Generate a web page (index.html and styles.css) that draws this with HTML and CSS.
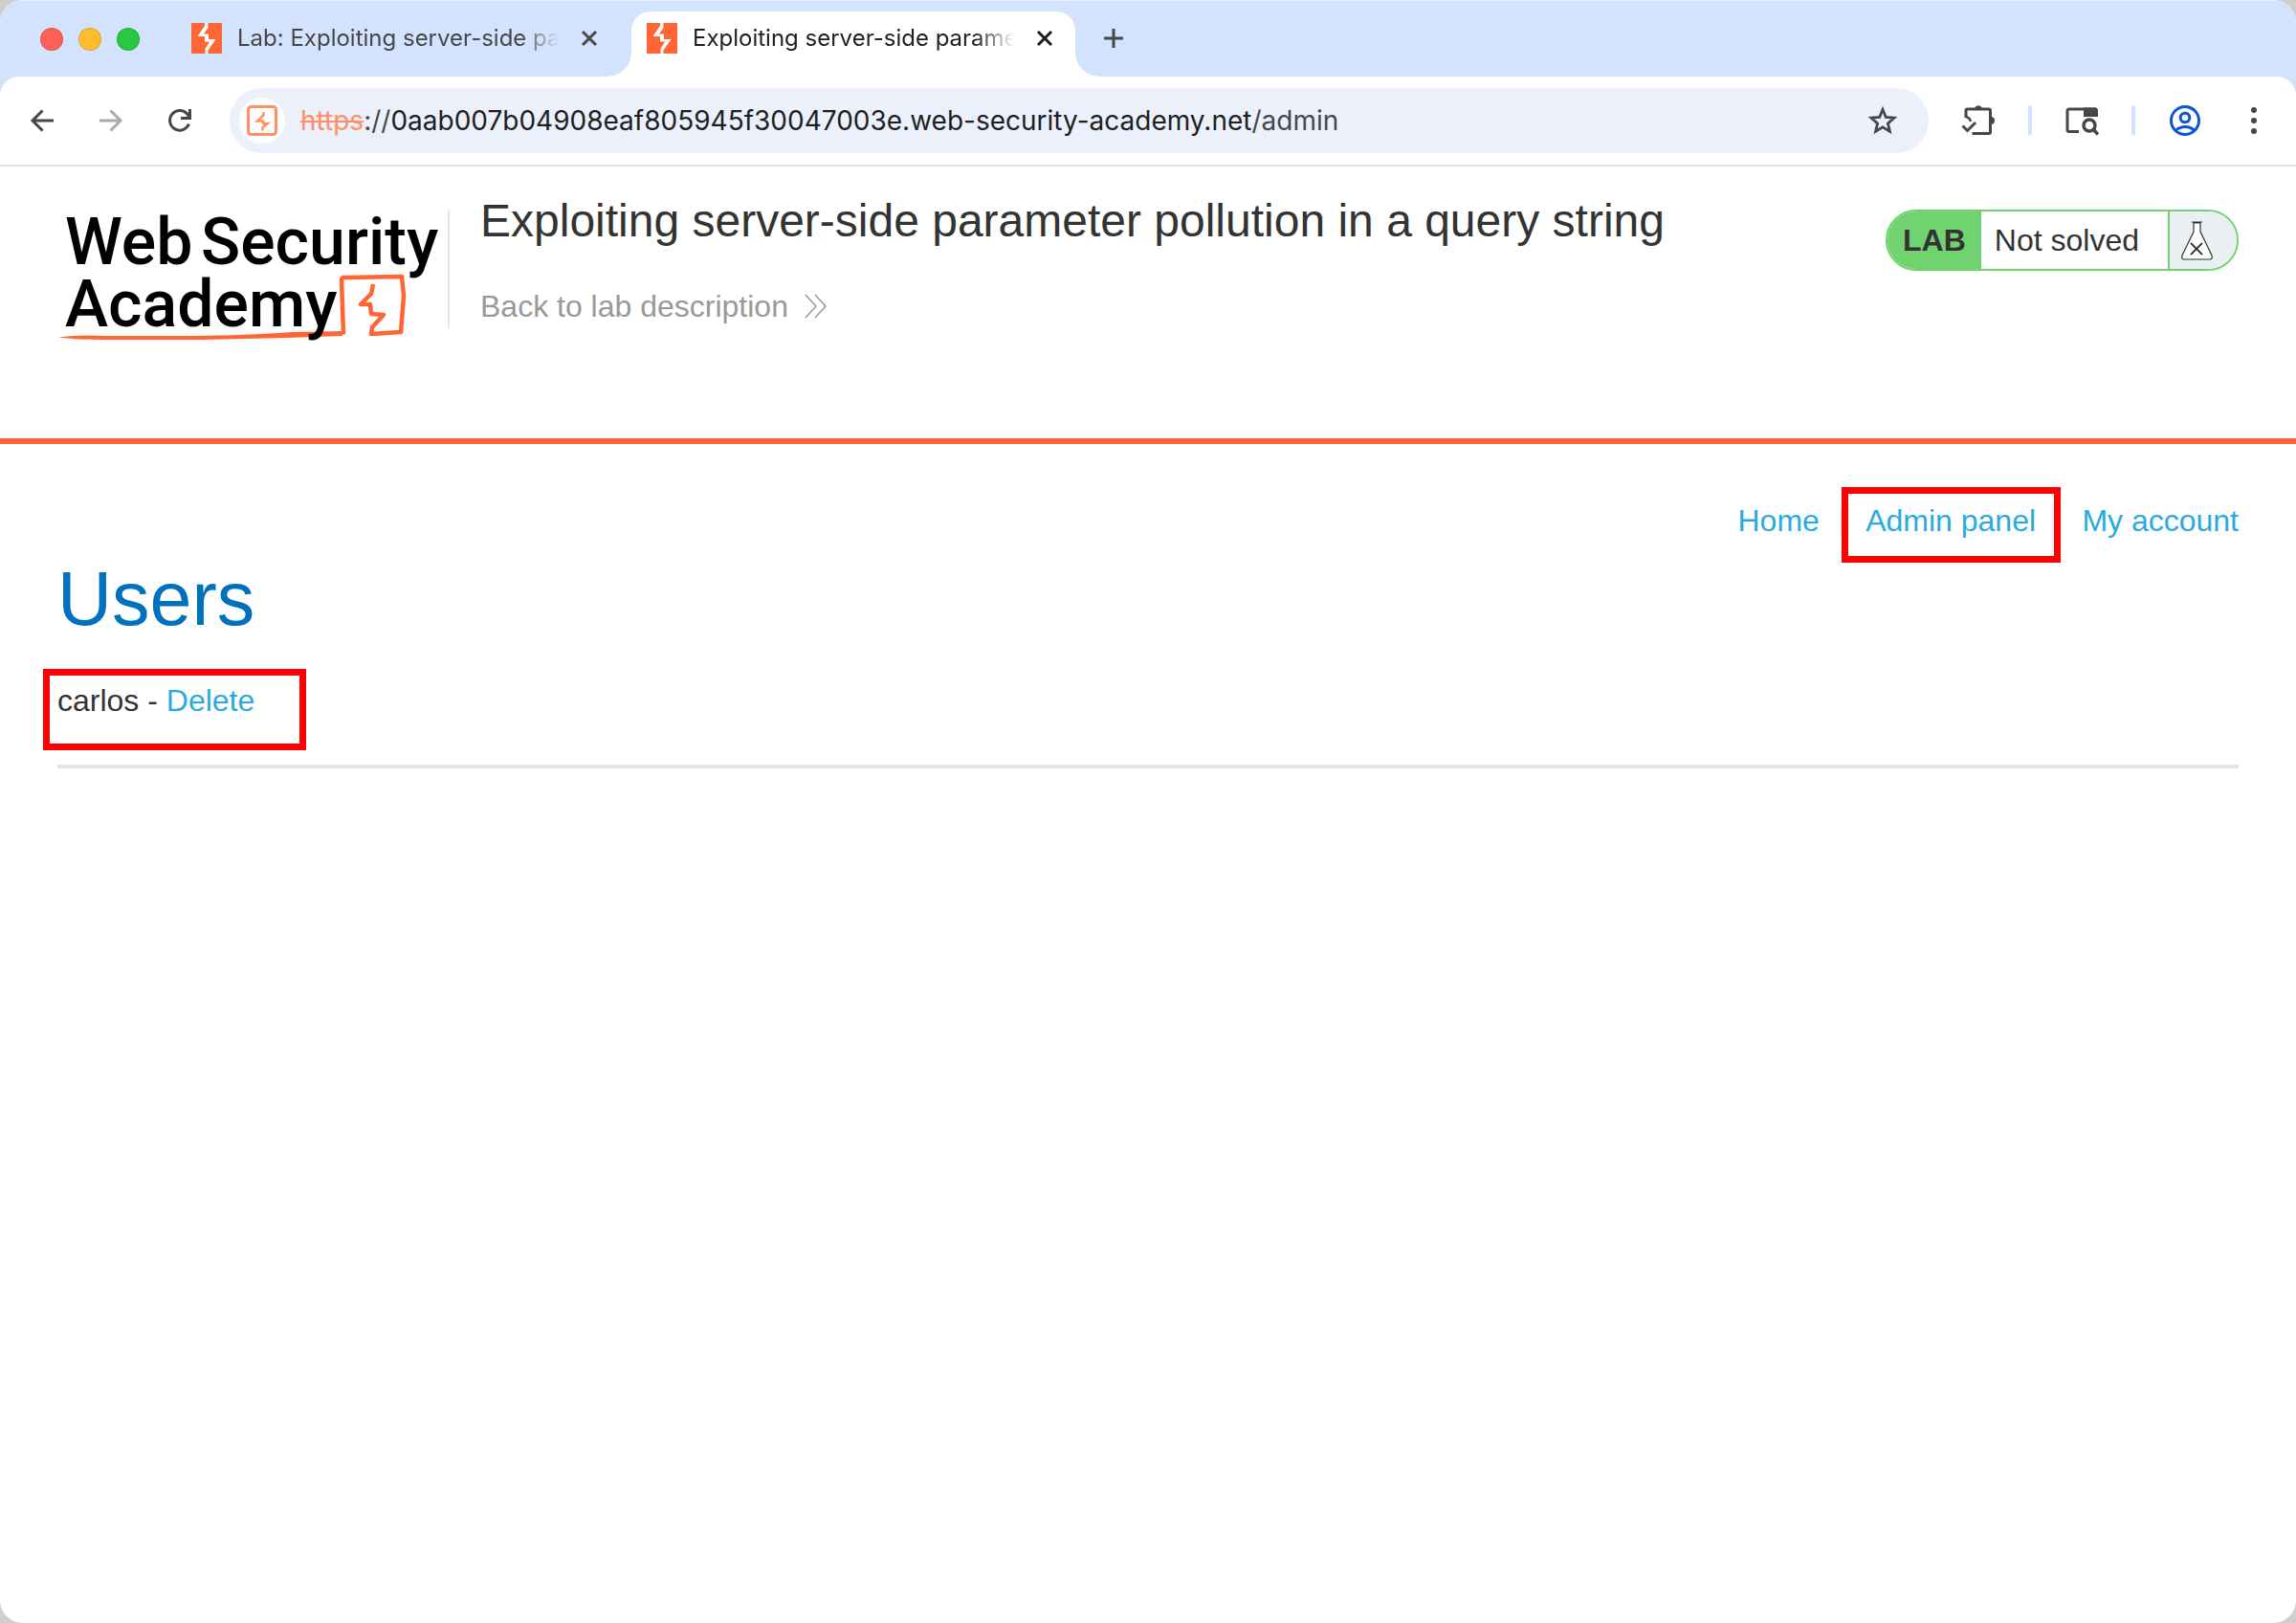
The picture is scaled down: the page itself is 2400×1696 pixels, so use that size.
FILE: index.html
```html
<!DOCTYPE html>
<html lang="en">
<head>
<meta charset="utf-8">
<title>Exploiting server-side parameter pollution in a query string</title>
<link rel="stylesheet" href="styles.css">
</head>
<body>
<svg class="defs" width="0" height="0" aria-hidden="true">
  <symbol id="burp" viewBox="0 0 32 32">
    <path fill="#ff6633" d="M0 0h32v32H0z"/>
    <path fill="#fff" d="M14 0h3.500v5l-4.500 6.500h5V17h7.500L17.500 28.500V32h-3v-5l4.500-7.500h-5V14H6.500L14 3z"/>
  </symbol>
  <symbol id="cross" viewBox="0 0 24 24">
    <path d="M5 5l14 14M19 5L5 19" stroke="currentColor" stroke-width="3" fill="none"/>
  </symbol>
</svg>
<div class="window">
  <header class="tabstrip">
    <div class="lights"><span class="light close"></span><span class="light min"></span><span class="light max"></span></div>
    <div class="tabs">
      <div class="tab">
        <svg class="favicon"><use href="#burp"/></svg>
        <span class="tab-title">Lab: Exploiting server-side parameter</span>
        <button class="tab-close" aria-label="Close tab"><svg width="24" height="24"><use href="#cross"/></svg></button>
      </div>
      <div class="tab active">
        <svg class="favicon"><use href="#burp"/></svg>
        <span class="tab-title">Exploiting server-side parameter</span>
        <button class="tab-close" aria-label="Close tab"><svg width="24" height="24"><use href="#cross"/></svg></button>
      </div>
    </div>
    <button class="new-tab" aria-label="New tab"><svg width="24" height="24" viewBox="0 0 24 24"><path d="M12 2v20M2 12h20" stroke="#474747" stroke-width="3"/></svg></button>
  </header>

  <nav class="toolbar" aria-label="Browser">
    <div class="history">
      <button class="tool" aria-label="Back"><svg width="32" height="32" viewBox="0 0 32 32"><path d="M28 16H6M16.500 5.500L6 16l10.500 10.500" fill="none" stroke="#474747" stroke-width="3"/></svg></button>
      <button class="tool" aria-label="Forward"><svg width="32" height="32" viewBox="0 0 32 32"><path d="M4 16h22M15.500 5.500L26 16 15.500 26.500" fill="none" stroke="#ababab" stroke-width="3"/></svg></button>
      <button class="tool" aria-label="Reload"><svg width="32" height="32" viewBox="0 0 32 32"><path d="M25.500 19.500A10.300 10.300 0 1 1 24 9.500L26 12M26.500 4v9.500H17" fill="none" stroke="#474747" stroke-width="3"/></svg></button>
    </div>
    <div class="omnibox">
      <button class="site" aria-label="Site information"><svg width="32" height="32" viewBox="0 0 32 32"><rect x="1.500" y="1.500" width="29" height="29" rx="3" fill="none" stroke="#ff8f66" stroke-width="3"/><path d="M17.500 7v3.500l-6.500 6h6V19h5l-5.500 4v3.500" fill="none" stroke="#ff8f66" stroke-width="2.400"/></svg></button>
      <div class="url" role="textbox" aria-label="Address"><s>https</s><span class="dim">://</span>0aab007b04908eaf805945f30047003e.web-security-academy.net<span class="dim">/admin</span></div>
      <button class="tool" aria-label="Bookmark"><svg width="32" height="32" viewBox="0 0 32 32"><path d="M16 4.500l3.300 8 8.700.7-6.600 5.700 2 8.500L16 22.900l-7.400 4.500 2-8.500L4 13.200l8.700-.7z" fill="none" stroke="#474747" stroke-width="2.800"/></svg></button>
    </div>
    <div class="actions">
      <button class="tool" aria-label="Extensions"><svg width="36" height="36" viewBox="0 0 36 36"><path d="M5 15V7.500a1.500 1.500 0 0 1 1.500-1.500H29a1.500 1.500 0 0 1 1.500 1.500V30a1.500 1.500 0 0 1-1.500 1.500H11.500" fill="none" stroke="#474747" stroke-width="3"/><path d="M14 5a4.300 4.300 0 0 1 8 0zM31 14a4 4 0 0 1 0 8z" fill="#474747"/><path d="M5 14c3 1 5 2.500 4.500 5" fill="none" stroke="#474747" stroke-width="2.500"/><path d="M1.500 23.500l5 5 8.500-8.500" fill="none" stroke="#474747" stroke-width="3"/></svg></button>
      <span class="divider"></span>
      <button class="tool" aria-label="Search side panel"><svg width="36" height="36" viewBox="0 0 36 36"><path d="M15 29.500H4.500a1.500 1.500 0 0 1-1.500-1.500V7.500A1.500 1.500 0 0 1 4.500 6H33" fill="none" stroke="#474747" stroke-width="3"/><path d="M20 4.500h12a3 3 0 0 1 3 3V14H20z" fill="#474747"/><circle cx="26" cy="23" r="6" fill="none" stroke="#474747" stroke-width="3.400"/><path d="M30 27l5 5.500" stroke="#474747" stroke-width="3.400"/></svg></button>
      <span class="divider"></span>
      <button class="tool" aria-label="Profile"><svg width="32" height="32" viewBox="0 0 32 32" fill="none" stroke="#0b57d0" stroke-width="3"><circle cx="16" cy="16" r="14.500"/><circle cx="16" cy="13" r="4.800"/><path d="M6 26.500c5.500-5.500 14.500-5.500 20 0"/></svg></button>
      <button class="tool menu" aria-label="Menu"><svg width="32" height="32" viewBox="0 0 32 32" fill="#474747"><circle cx="16" cy="5" r="3"/><circle cx="16" cy="16" r="3"/><circle cx="16" cy="27" r="3"/></svg></button>
    </div>
  </nav>

  <section class="lab-header">
    <a class="logo" href="#" aria-label="Web Security Academy">
      <svg width="408" height="150" viewBox="60 210 408 150">
        <path d="M61 352.500Q82 349.500 110 351L200 351Q270 350 305 347L358 346V351L300 353 210 355 110 355Q80 355 61 352.500z" fill="#ff6633"/>
        <path d="M359 349.500L357 292Q358 289 362 290L420 289L422 309L419 347L388 349L389 342L401 329L388 328L387 318H377L388 307 390 297" fill="none" stroke="#ff6633" stroke-width="4.500" stroke-linejoin="round"/>
        <text class="logo-text" x="68" y="276">Web</text>
        <text class="logo-text" x="210" y="276">Security</text>
        <text class="logo-text" x="68" y="341">Academy</text>
      </svg>
    </a>
    <div class="lab-title">
      <h2>Exploiting server-side parameter pollution in a query string</h2>
      <a class="back" href="#">Back to lab description <svg width="26" height="26" viewBox="0 0 26 26"><path d="M2 1l11 12L2 25M12 1l11 12-11 12" fill="none" stroke="#999" stroke-width="1.500"/></svg></a>
    </div>
    <div class="status">
      <strong>LAB</strong>
      <span class="state">Not solved</span>
      <span class="flask"><svg width="34" height="42" viewBox="0 0 34 42"><path d="M12 2h11M14 3v9L2 37q-1 4 2 4h27q3 0 2-4L21 12V3z" fill="#fff" stroke="#333332" stroke-width="1.200"/><path d="M11 24l12 12M23 24L11 36" stroke="#333332" stroke-width="1.800"/></svg></span>
    </div>
  </section>

  <main class="content">
    <nav class="links" aria-label="Site">
      <a href="#">Home</a><span class="pipe">|</span><a class="marked marked-admin" href="#">Admin panel</a><span class="pipe">|</span><a href="#">My account</a>
    </nav>
    <h1>Users</h1>
    <div class="users"><span class="marked marked-user">carlos - <a href="#">Delete</a></span></div>
    <hr>
  </main>
</div>
</body>
</html>
```
FILE: styles.css
```css
* { box-sizing: border-box; }
body { margin: 0; background: #cfcfcf; font-family: "Liberation Sans", Arial, sans-serif; font-size: 32px; line-height: 40px; color: #333332; }
button { border: 0; padding: 0; background: none; display: flex; align-items: center; justify-content: center; flex: none; }
a { color: #29abe2; text-decoration: none; }
svg { display: block; flex: none; }
.defs { position: absolute; }

.window { min-height: 100vh; background: #fff; border-radius: 24px; overflow: hidden; }

.tabstrip { height: 100px; margin-bottom: -20px; padding-bottom: 20px; background: #d3e2fd; border-top: 1px solid #e9f0fe; display: flex; align-items: flex-end; font-family: Inter, sans-serif; }
.lights { display: flex; gap: 16px; padding: 0 38px 27px 42px; }
.light { width: 24px; height: 24px; border-radius: 50%; border: 1px solid rgba(0, 0, 0, .12); }
.close { background: #ff5f57; }
.min { background: #febc2e; }
.max { background: #28c840; }
.tabs { display: flex; gap: 12px; }
.tab { position: relative; width: 464px; height: 68px; padding: 0 20px 12px 16px; display: flex; align-items: center; gap: 16px; color: #474747; border-radius: 20px 20px 0 0; }
.tab.active { background: #fff; color: #1f1f1f; }
.tab.active::before, .tab.active::after { content: ""; position: absolute; bottom: 0; width: 24px; height: 24px; }
.tab.active::before { left: -24px; background: radial-gradient(circle at 0 0, transparent 23px, #fff 24px); }
.tab.active::after { right: -24px; background: radial-gradient(circle at 100% 0, transparent 23px, #fff 24px); }
.favicon { width: 32px; height: 32px; }
.tab-title { flex: 1; font-size: 24px; line-height: 32px; white-space: nowrap; overflow: hidden; -webkit-mask-image: linear-gradient(to left, transparent, #000 40px); mask-image: linear-gradient(to left, transparent, #000 40px); }
.tab-close { margin-left: 4px; width: 24px; height: 24px; color: inherit; }
.new-tab { width: 48px; height: 48px; margin: 0 0 16px 16px; }

.toolbar { position: relative; height: 94px; background: #fff; border-bottom: 2px solid #e1e1e1; display: flex; align-items: center; padding: 0 20px; gap: 28px; border-radius: 20px 20px 0 0; }
.history { display: flex; gap: 24px; }
.tool { width: 48px; height: 48px; }
.omnibox { flex: 1; height: 68px; border-radius: 34px; background: #ebf0fa; display: flex; align-items: center; gap: 16px; padding: 0 24px 0 10px; }
.site { width: 48px; height: 48px; border-radius: 50%; background: #fff; }
.url { flex: 1; font-family: Inter, sans-serif; font-size: 28px; color: #1f1f1f; white-space: nowrap; }
.url s { color: #ff8f66; }
.dim { color: #474747; }
.actions { display: flex; align-items: center; gap: 28px; }
.divider { width: 4px; height: 32px; border-radius: 2px; background: #d3e3fd; }
.menu { margin-left: -4px; }

.lab-header { height: 290px; border-bottom: 6px solid #ff6633; padding: 36px 60px 0; display: flex; align-items: flex-start; }
.logo-text { font-family: Roboto, sans-serif; font-weight: 500; font-size: 68px; fill: #000; }
.lab-title { margin: 9px 0 0; padding-left: 32px; border-left: 2px solid #e5e5e5; height: 124px; flex: 1; }
.lab-title h2 { margin: -16px 0 0; font-weight: 400; font-size: 48px; line-height: 56px; }
.back { display: flex; align-items: center; gap: 16px; margin-top: 41px; color: #999; }
.status { margin-top: 9px; height: 64px; border: 2px solid #70d36f; border-radius: 32px; overflow: hidden; display: flex; line-height: 60px; }
.status strong { background: #70d36f; padding: 0 16px; }
.state { padding: 0 30px 0 14px; border-right: 2px solid #70d36f; }
.flask { width: 70px; padding-left: 11px; background: #eaf0f2; display: flex; align-items: center; }

.content { padding: 60px 60px 0; }
.links { display: flex; justify-content: flex-end; gap: 20px; }
.pipe { color: #ccc; }
h1 { margin: 14px 0 0; font-weight: 400; font-size: 79px; line-height: 96px; color: #0071bc; }
.users { margin-top: 38px; }
.marked { position: relative; }
.marked::after { content: ""; position: absolute; border: 7px solid #ff0004; pointer-events: none; }
.marked-admin::after { inset: -15px -26px -24px -25px; }
.marked-user::after { inset: -15px -54px -34px -15px; }
hr { margin: 47px 0 0; border: 0; height: 4px; background: #e5e5e5; }
```
